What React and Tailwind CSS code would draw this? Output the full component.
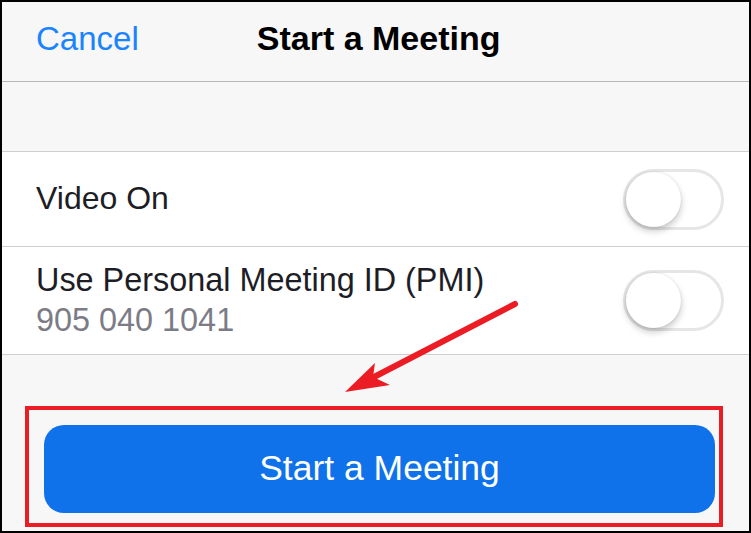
import React, { useState } from 'react'

function Toggle({ on, onChange }) {
    return (
        <button
            onClick={() => onChange(!on)}
            className="w-[101px] h-[61px] rounded-full border-[3px] border-[#e6e6e6] bg-white flex items-center shrink-0"
        >
            <span className="w-[55px] h-[55px] rounded-full bg-white shadow-[0_4px_7px_rgba(0,0,0,0.22),0_0_2px_rgba(0,0,0,0.12)]" />
        </button>
    )
}

export default function App() {
    const [videoOn, setVideoOn] = useState(false)
    const [usePmi, setUsePmi] = useState(false)

    return (
        <div
            className="relative w-[751px] h-[533px] overflow-hidden border-2 border-black bg-[#f7f7f7]"
            style={{ fontFamily: '"Liberation Sans", Arial, sans-serif' }}
        >
            {/* header */}
            <div className="h-[80px] flex items-center pl-[34px] border-b border-[#b8b8b8] pb-[6px]">
                <span className="text-[33px] text-[#1a84ff]">Cancel</span>
                <span className="ml-[118px] text-[34px] font-bold text-black">Start a Meeting</span>
            </div>

            <div className="h-[70px] border-b border-[#cfcfcf]" />

            {/* options */}
            <div className="h-[95px] bg-white border-b border-[#cfcfcf] flex items-center justify-between pl-[34px] pr-[25px]">
                <span className="text-[32px] text-[#1d1d26] pb-[2px]">Video On</span>
                <Toggle on={videoOn} onChange={setVideoOn} />
            </div>
            <div className="h-[108px] bg-white border-b border-[#cfcfcf] flex items-center justify-between pl-[34px] pr-[25px]">
                <div className="flex flex-col pb-[2px]">
                    <span className="text-[32.4px] leading-[40px] text-[#1d1d26]">Use Personal Meeting ID (PMI)</span>
                    <span className="text-[32.4px] leading-[40px] text-[#7c7c86]">905 040 1041</span>
                </div>
                <Toggle on={usePmi} onChange={setUsePmi} />
            </div>

            {/* start button, boxed */}
            <div className="pt-[51px] pl-[23px]">
                <div className="w-[698px] h-[121px] border-4 border-[#ec1c24] pt-[15px] pl-[15px]">
                    <button className="w-[671px] h-[88px] rounded-[20px] bg-[#0f72ea] text-white text-[35.5px] flex items-center justify-center">
                        Start a Meeting
                    </button>
                </div>
            </div>

            {/* annotation arrow */}
            <svg className="absolute left-[-2px] top-[-2px] pointer-events-none" width="751" height="533" viewBox="0 0 751 533">
                <line x1="515" y1="304" x2="374" y2="377" stroke="#ec1c24" strokeWidth="6" strokeLinecap="round" />
                <polygon points="345,392 375,363 373,377 390,385" fill="#ec1c24" />
            </svg>
        </div>
    )
}
